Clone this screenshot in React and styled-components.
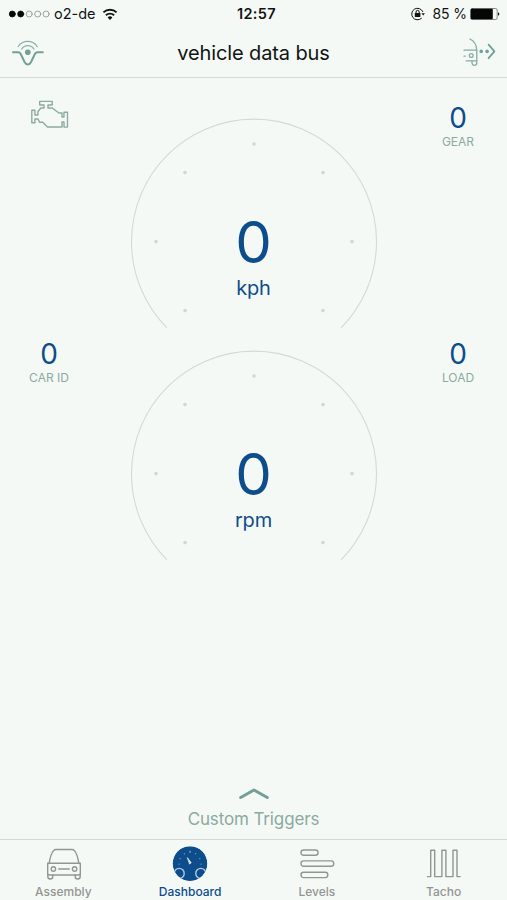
import React from 'react'
import styled, { createGlobalStyle, ThemeProvider } from 'styled-components'

const theme = {
  background: '#f5f9f6',
  black: '#111413',
  blue: '#0d4d8c',
  teal: '#71a097',
  muted: '#8caaa2',
  gray: '#929693',
  line: '#d3dad6',
}

const GlobalStyle = createGlobalStyle`
  * { box-sizing: border-box; }

  body {
    margin: 0;
    background: ${theme.background};
    font-family: Inter, 'Liberation Sans', sans-serif;
  }
`

const Screen = styled.div`
  display: flex;
  flex-direction: column;
  width: 507px;
  height: 900px;
  overflow: hidden;
  background: ${({ theme }) => theme.background};
`

const StatusBar = styled.div`
  display: grid;
  grid-template-columns: 1fr auto 1fr;
  align-items: center;
  height: 28px;
  padding: 0 7px 0 8px;
  color: ${({ theme }) => theme.black};
  font-size: 14px;
  line-height: 28px;
`

const StatusGroup = styled.div`
  display: flex;
  align-items: center;
  justify-content: ${({ $end }) => ($end ? 'flex-end' : 'flex-start')};
`

const Carrier = styled.span`
  margin: 0 6px 0 4px;
  font-size: 14.5px;
`

const Clock = styled.span`
  padding-left: 5px;
  font-size: 14.5px;
  font-weight: 600;
  letter-spacing: 0.35px;
`

const Percent = styled.span`
  margin: 0 3px 0 8px;
  letter-spacing: -0.1px;
`

const NavBar = styled.header`
  display: grid;
  grid-template-columns: 50px 1fr 50px;
  align-items: center;
  height: 50px;
  border-bottom: 1px solid ${({ theme }) => theme.line};
  color: ${({ theme }) => theme.teal};
`

const Title = styled.h1`
  margin: 0;
  color: ${({ theme }) => theme.black};
  font-size: 20px;
  font-weight: 400;
  letter-spacing: -0.13px;
  line-height: 48px;
  text-align: center;
`

const NavIcon = styled.div`
  display: flex;
  justify-content: ${({ $end }) => ($end ? 'flex-end' : 'flex-start')};
  padding: ${({ $end }) => ($end ? '0 11px 0 0' : '0 0 0 11px')};
`

const Panel = styled.main`
  display: grid;
  flex: 1;
  grid-template-columns: 98px 1fr 98px;
  grid-template-rows: 232px 232px;
  padding-top: 41px;
`

const Cell = styled.div`
  display: flex;
  flex-direction: column;
  align-items: center;
  margin-top: ${({ $offset }) => $offset}px;
`

const Value = styled.div`
  color: ${({ theme }) => theme.blue};
  font-size: 28px;
  line-height: 30px;
`

const Caption = styled.div`
  color: ${({ theme }) => theme.muted};
  font-size: 12px;
  line-height: 18px;
`

const GaugeRoot = styled.div`
  display: grid;
  justify-content: center;
  align-content: start;

  > * { grid-area: 1 / 1; }
`

const Readout = styled.div`
  display: flex;
  flex-direction: column;
  align-items: center;
  padding-top: 88px;
  color: ${({ theme }) => theme.blue};
`

const Speed = styled.div`
  font-size: 58px;
  line-height: 70px;
`

const Unit = styled.div`
  font-size: 20px;
  letter-spacing: -0.15px;
  line-height: 22px;
`

const Triggers = styled.button`
  display: flex;
  flex-direction: column;
  align-items: center;
  height: 54px;
  padding: 0;
  border: 0;
  background: none;
  color: ${({ theme }) => theme.muted};
  font-family: inherit;
  font-size: 17px;
  letter-spacing: -0.13px;
  line-height: 24px;
`

const TabBar = styled.nav`
  display: grid;
  grid-template-columns: repeat(4, 1fr);
  height: 61px;
  border-top: 1px solid ${({ theme }) => theme.line};
`

const Tab = styled.a`
  display: flex;
  flex-direction: column;
  align-items: center;
  color: ${({ $active, theme }) => ($active ? theme.blue : theme.gray)};
  font-size: 12px;
  font-weight: 500;
  line-height: 16px;
`

const TabIcon = styled.div`
  display: flex;
  align-items: center;
  height: 44px;
  padding-top: 3px;
`

const Line = styled.svg`
  display: block;
  overflow: visible;
  fill: none;
  stroke: currentColor;
  stroke-linecap: round;
  stroke-linejoin: round;
  stroke-width: ${({ $weight }) => $weight || 1.4}px;
`

const EngineLine = styled(Line)`
  color: ${({ theme }) => theme.muted};
`

const SignalDots = () => (
  <Line width="42" height="12" viewBox="0 0 42 12" $weight={0.8}>
    {[4.3, 12.7, 21.2, 29.7, 38.1].map((x, index) => (
      <circle
        key={x}
        cx={x}
        cy="6"
        r="3"
        fill={index < 2 ? '#080a09' : 'none'}
        stroke={index < 2 ? '#080a09' : '#8a8e8c'}
      />
    ))}
  </Line>
)

const WifiIcon = () => (
  <Line width="16" height="13" viewBox="0 0 16 13" $weight={1.9}>
    <g strokeLinecap="butt">
      <path d="M1.4 4.4a9.6 9.6 0 0 1 13.2 0" />
      <path d="M3.9 7.2a6 6 0 0 1 8.2 0" />
      <path d="M8 12 5.6 9.4a3.5 3.5 0 0 1 4.8 0z" fill="currentColor" stroke="none" />
    </g>
  </Line>
)

const LockIcon = () => (
  <Line width="14" height="14" viewBox="0 0 14 14" $weight={1}>
    <path d="M11.8 4.6A5.8 5.8 0 1 0 10.4 11.4" />
    <path d="m10.4 6.2 1.9 2.2 1.6-2.2z" fill="currentColor" stroke="none" />
    <rect x="3.8" y="6" width="5.6" height="4" rx=".4" fill="currentColor" stroke="none" />
    <path d="M5 6.2V5a1.6 1.6 0 0 1 3.2 0v1.2" />
  </Line>
)

const BatteryIcon = () => (
  <Line width="30" height="12" viewBox="0 0 30 12" $weight={0.7}>
    <rect x=".5" y=".5" width="26.7" height="11" rx="1.8" stroke="#555957" />
    <rect x=".8" y=".8" width="22" height="10.4" rx="1" fill="#050606" stroke="none" />
    <path d="M28 4.2c1.8.7 1.8 2.9 0 3.6z" fill="currentColor" stroke="none" />
  </Line>
)

const SensorIcon = () => (
  <Line width="33" height="28" viewBox="0 0 33 28" $weight={2}>
    <path d="M2 13.2h5.1c1.4 0 2.1.6 2.6 1.8l4 8.2c1.5 2.9 4.7 2.9 6.2 0l4-8.2c.6-1.2 1.2-1.8 2.6-1.8h5.3" />
    <circle cx="16.8" cy="13.2" r="2.8" fill="currentColor" stroke="none" />
    <g strokeWidth="1.2" opacity=".8">
      <path d="M7.1 7.7a11.4 11.4 0 0 1 19.2 0" />
      <path d="M10.7 10.1a7.2 7.2 0 0 1 12.2 0" />
    </g>
  </Line>
)

const ExportIcon = () => (
  <Line width="34" height="31" viewBox="0 0 34 31" $weight={1.3}>
    <g opacity=".85">
      <path d="M7.9 2c4.5 2 6.6 6 6.9 11.2v12.6c0 3.4-4.8 3.4-4.8 0v-2" />
      <path d="M2 13.2h12.7M4.2 23.8h10.4M2 19.2h1.2" />
      <circle cx="9.2" cy="18.5" r="1.9" />
    </g>
    <circle cx="19.2" cy="14.4" r="1.8" fill="currentColor" stroke="none" />
    <circle cx="25.1" cy="14.4" r="1.8" fill="currentColor" stroke="none" />
    <path d="m26.6 7.6 5.8 6.8-5.8 6.8" strokeWidth="1.8" />
  </Line>
)

const EngineIcon = () => (
  <EngineLine width="38" height="30" viewBox="-.5 0 38 30">
    <path d="M9.2 1.4h12.5V5h-4.2v3h4.3l6.6 5h3.1v4h2v-4.8H37v14.9h-3.5V22h-2v5H17l-4.8-4.7H9L7.6 19H4.4v3.7H1.3V10.3h3.1V15h3v-3.3L10.3 8h3.2V5H9.2z" />
  </EngineLine>
)

const CarIcon = () => (
  <Line width="36" height="32" viewBox="-1 0 36 32">
    <path d="M3.2 15.2C4.1 9 5.7 4.7 7.6 2.6 8.3 1.8 9 1.5 10 1.5h16c1 0 1.7.3 2.4 1.1 1.9 2.1 3.5 6.4 4.4 12.6" />
    <path d="M1.7 15.2h32.6v10.3a1.5 1.5 0 0 1-1.5 1.5H3.2a1.5 1.5 0 0 1-1.5-1.5z" />
    <path d="M1.8 26.5v2a2.5 2.5 0 0 0 5 0V27M29.2 27v1.5a2.5 2.5 0 0 0 5 0v-2M12.7 21h10.6" />
    <circle cx="7.4" cy="21" r="2.2" />
    <circle cx="28.6" cy="21" r="2.2" />
  </Line>
)

const DashboardIcon = () => (
  <Line width="36" height="36" viewBox="0 0 36 36">
    <clipPath id="dial">
      <circle cx="18" cy="17.6" r="17.4" />
    </clipPath>
    <g clipPath="url(#dial)">
      <circle cx="18" cy="17.6" r="17.4" fill="currentColor" stroke="none" />
      <circle cx="7.2" cy="27.4" r="5" stroke="#a9cbe6" />
      <circle cx="28.8" cy="27.4" r="5" stroke="#a9cbe6" />
    </g>
    <path d="m15.6 12 3.5 4.7-1.2 1.2z" fill="#e5f0f6" stroke="#e5f0f6" strokeWidth=".8" />
    <path
      d="M7 18v.1M8.2 12.6v.1M12.3 7.7v.1M18 5.2v1.3M23.7 7.7v.1M27.8 12.6v.1M29 18v.1"
      stroke="#7eadd2"
      strokeWidth="1.2"
    />
  </Line>
)

const LevelsIcon = () => (
  <Line width="36" height="32" viewBox="-.5 0 36 32">
    <rect x="1.5" y="2" width="17" height="5.2" rx="2.5" />
    <rect x="1.5" y="12.9" width="32.7" height="5.4" rx="2.6" />
    <rect x="1.5" y="24.2" width="26.8" height="5.4" rx="2.6" />
  </Line>
)

const TachoIcon = () => (
  <Line width="36" height="32" viewBox="0 0 36 32">
    <path d="M1.5 28.6h3.2V2.2h4v26.4h7.2V2.2h4v26.4h7.1V2.2h4v26.4h3.2" />
  </Line>
)

// Positions on the dial face, in the coordinate space of the arc
const ticks = [
  [123, 25],
  [54, 53.6],
  [192, 53.6],
  [25, 122.6],
  [221, 122.6],
  [54, 191.6],
  [192, 191.6],
]

const Gauge = ({ unit, value }) => (
  <GaugeRoot>
    <Line width="246" height="210" viewBox="0 0 246 210" $weight={1.1}>
      <path
        d="M35.9 208.8A122.5 122.5 0 1 1 210.1 208.8"
        stroke="#d0dbd4"
        strokeLinecap="butt"
      />
      {ticks.map(([x, y]) => (
        <circle key={`${x}-${y}`} cx={x} cy={y} r="1.8" fill="#d0d8d4" stroke="none" />
      ))}
    </Line>
    <Readout>
      <Speed>{value}</Speed>
      <Unit>{unit}</Unit>
    </Readout>
  </GaugeRoot>
)

const Metric = ({ label, offset, value }) => (
  <Cell $offset={offset}>
    <Value>{value}</Value>
    <Caption>{label}</Caption>
  </Cell>
)

const tabs = [
  { label: 'Assembly', Icon: CarIcon },
  { label: 'Dashboard', Icon: DashboardIcon, active: true },
  { label: 'Levels', Icon: LevelsIcon },
  { label: 'Tacho', Icon: TachoIcon },
]

export default function App() {
  return (
    <ThemeProvider theme={theme}>
      <GlobalStyle />
      <Screen>
        <StatusBar>
          <StatusGroup>
            <SignalDots />
            <Carrier>o2-de</Carrier>
            <WifiIcon />
          </StatusGroup>
          <Clock>12:57</Clock>
          <StatusGroup $end>
            <LockIcon />
            <Percent>85 %</Percent>
            <BatteryIcon />
          </StatusGroup>
        </StatusBar>
        <NavBar>
          <NavIcon><SensorIcon /></NavIcon>
          <Title>vehicle data bus</Title>
          <NavIcon $end><ExportIcon /></NavIcon>
        </NavBar>
        <Panel>
          <Cell $offset={-19}><EngineIcon /></Cell>
          <Gauge value={0} unit="kph" />
          <Metric offset={-16} value={0} label="GEAR" />
          <Metric offset={-12} value={0} label="CAR ID" />
          <Gauge value={0} unit="rpm" />
          <Metric offset={-12} value={0} label="LOAD" />
        </Panel>
        <Triggers>
          <Line width="32" height="22" viewBox="0 0 32 22" $weight={3} color={theme.teal}>
            <path d="m2.7 12.5 13.3-7.5 13.3 7.5" />
          </Line>
          Custom Triggers
        </Triggers>
        <TabBar>
          {tabs.map(({ label, Icon, active }) => (
            <Tab key={label} $active={active}>
              <TabIcon><Icon /></TabIcon>
              {label}
            </Tab>
          ))}
        </TabBar>
      </Screen>
    </ThemeProvider>
  )
}
